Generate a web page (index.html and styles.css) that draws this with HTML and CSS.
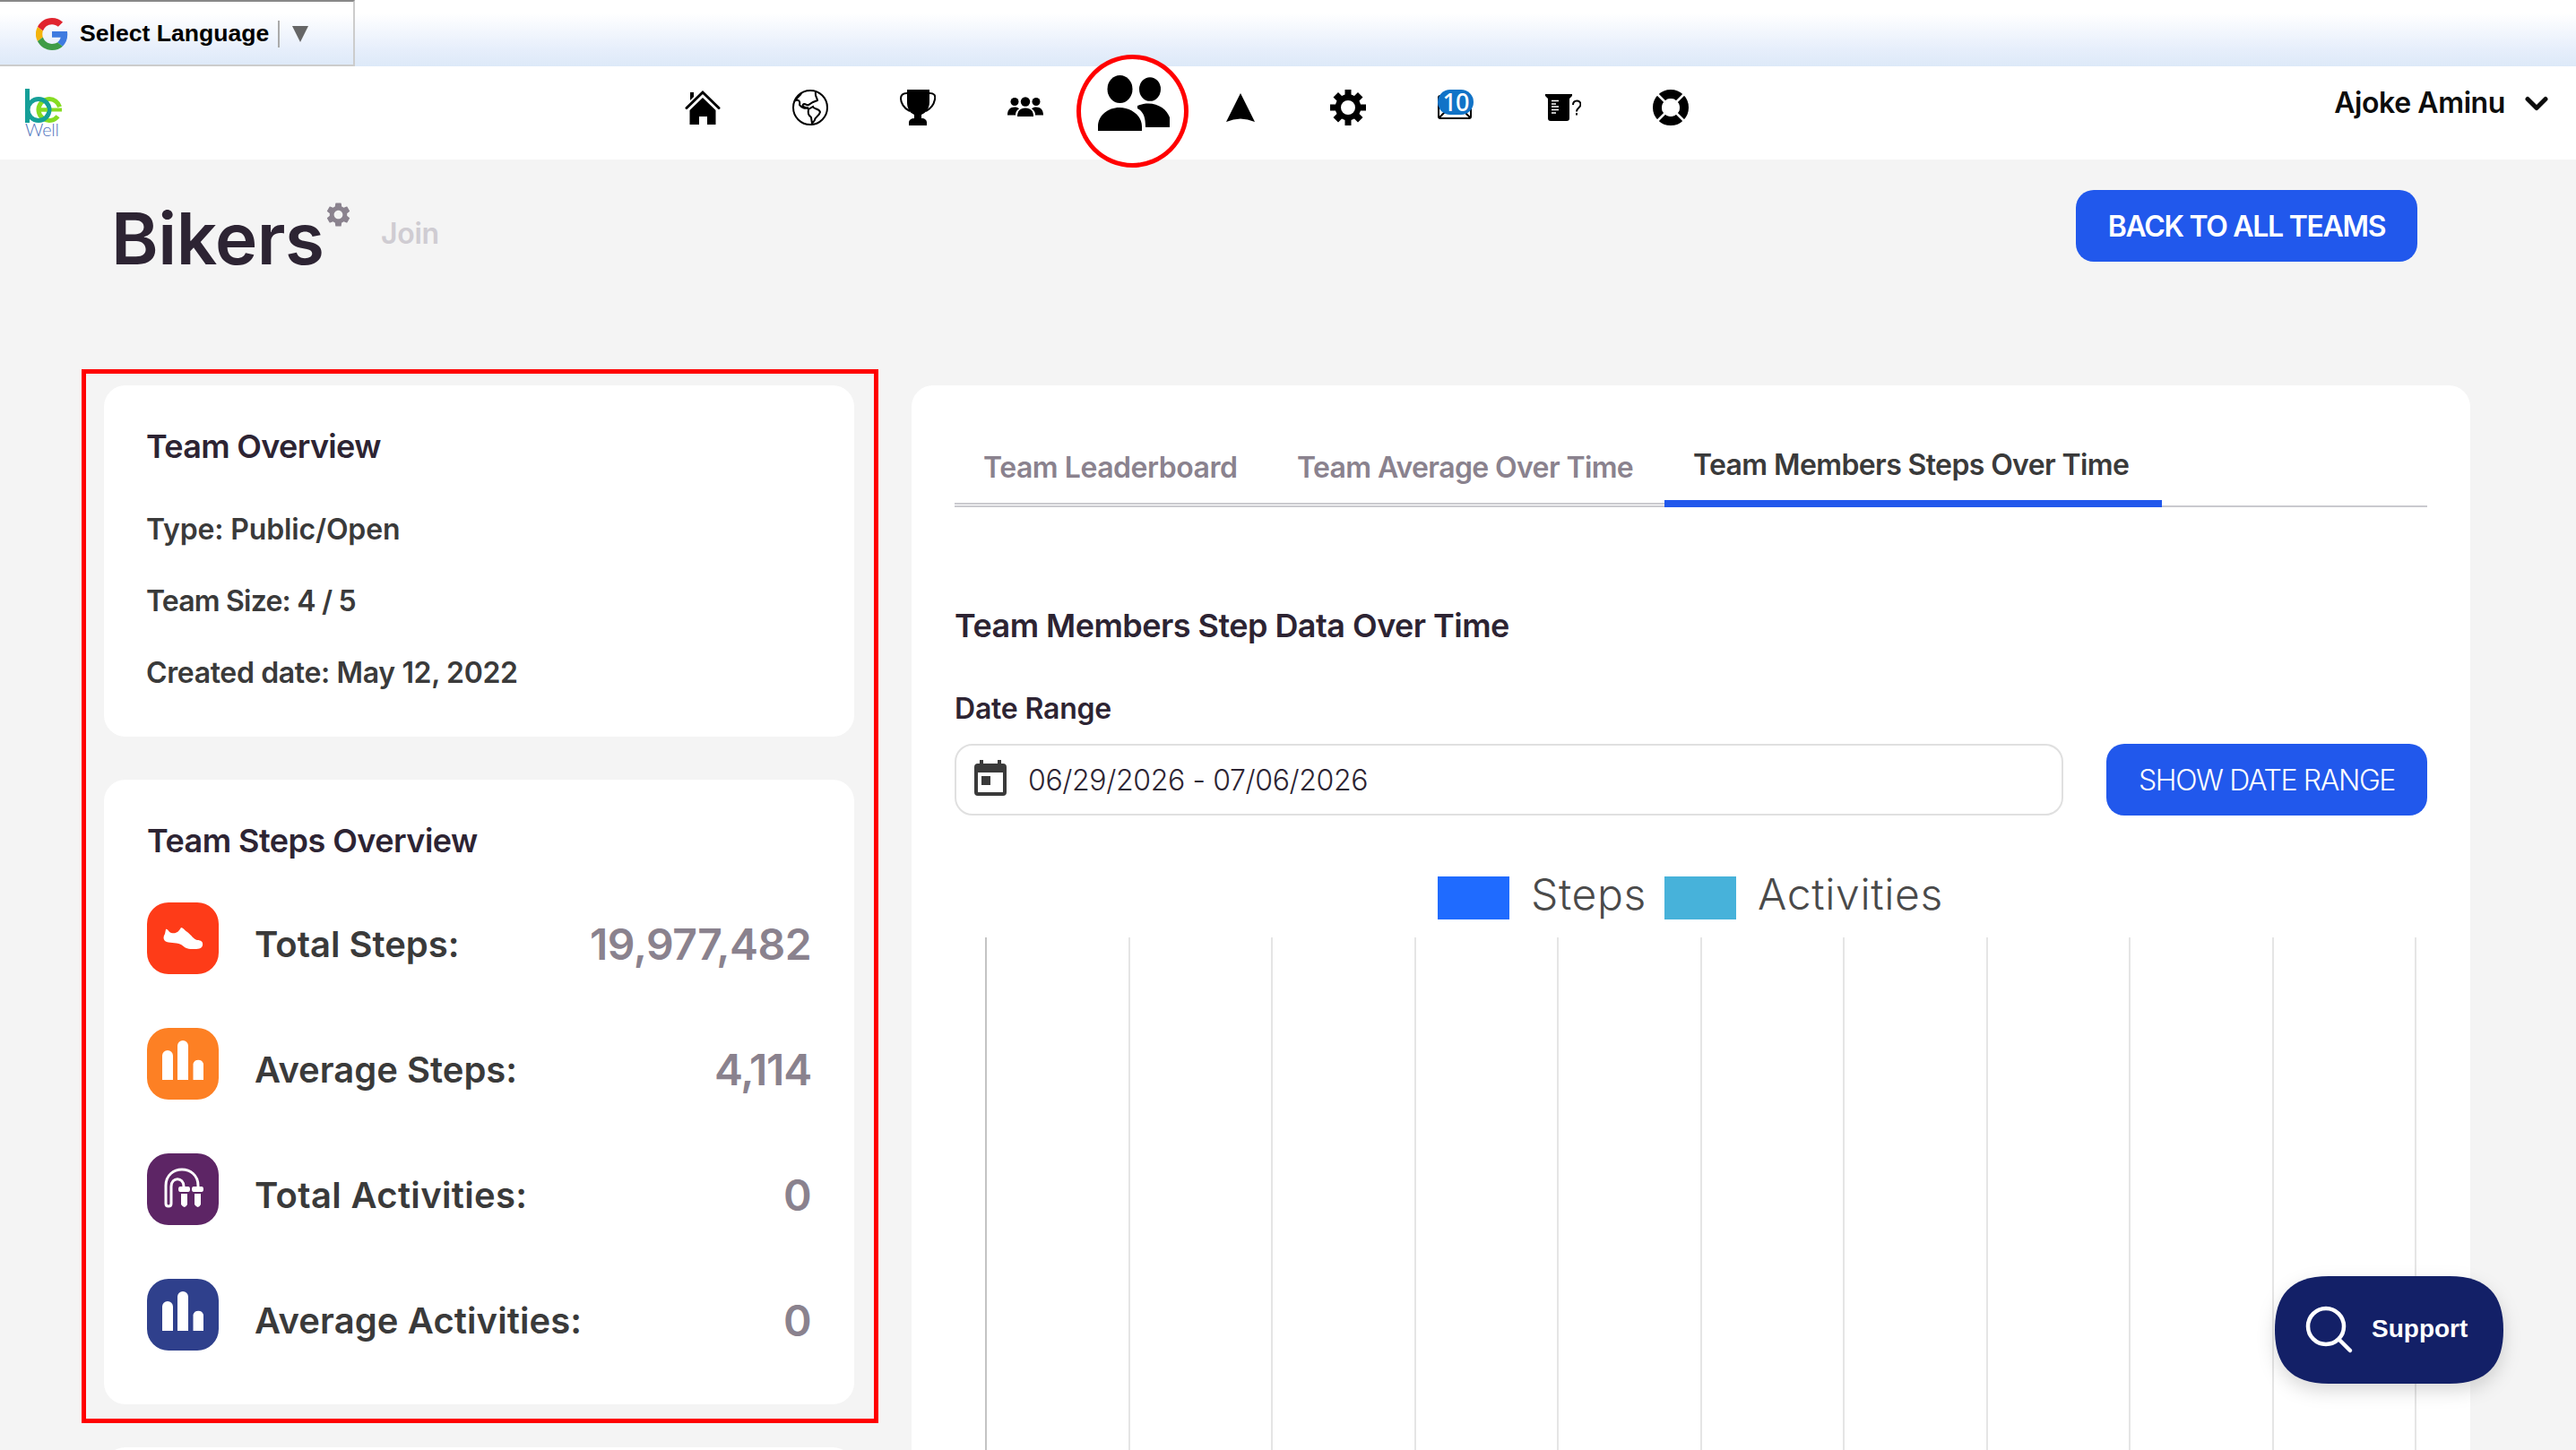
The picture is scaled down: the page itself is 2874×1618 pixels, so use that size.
FILE: index.html
```html
<!DOCTYPE html>
<html lang="en">
<head>
    <meta charset="UTF-8">
    <title>Bikers</title>
    <link rel="stylesheet" href="styles.css">
</head>
<body>
<div class="translate_bar">
    <div class="translate">
        <svg class="google" viewBox="0 0 48 48">
            <path fill="#e0242f" d="M24 9.5c3.5 0 6.700 1.200 9.200 3.600l6.900-6.900C35.900 2.400 30.500 0 24 0 14.600 0 6.500 5.400 2.600 13.200l8 6.200C12.400 13.700 17.700 9.500 24 9.500z"/>
            <path fill="#3f7be0" d="M47 24.600c0-1.600-.2-3.100-.4-4.600H24v9h12.900c-.6 3-2.300 5.500-4.800 7.200l7.700 6C44.400 38 47 31.800 47 24.600z"/>
            <path fill="#f3b30c" d="M10.500 28.600a14.500 14.500 0 0 1 0-9.200l-8-6.200a24 24 0 0 0 0 21.600z"/>
            <path fill="#3f9c46" d="M24 48c6.500 0 11.900-2.100 15.900-5.800l-7.700-6c-2.200 1.500-4.900 2.300-8.200 2.300-6.300 0-11.600-4.200-13.500-9.900l-8 6.200C6.500 42.600 14.600 48 24 48z"/>
        </svg>
        <span class="translate_text">Select Language</span>
        <span class="translate_arrow"></span>
    </div>
</div>
<header class="navbar">
    <svg class="logo" viewBox="0 0 44 56">
        <g fill="none">
            <circle cx="27" cy="23.500" r="12" stroke="#86dc22" stroke-width="5" stroke-dasharray="64 12" transform="rotate(37 27 23.500)"/>
            <path d="M15 23.500h26" stroke="#86dc22" stroke-width="4"/>
            <circle cx="15" cy="23.500" r="12" stroke="#159f98" stroke-width="5"/>
            <path d="M2.500 0v38" stroke="#159f98" stroke-width="5"/>
            <path d="M15 23.500h10" stroke="#86dc22" stroke-width="4"/>
        </g>
        <text class="logo_text" x="0" y="53" textLength="38">Well</text>
    </svg>
    <nav class="menu">
        <svg class="icon" viewBox="0 0 40 40">
            <path d="M6 3h4v5l-4 4z"/>
            <path d="M2 20.500L20 3l18 17.500" fill="none" stroke="#000" stroke-width="3" stroke-linecap="round"/>
            <path d="M5.500 23L20 9l14.500 14v16H25v-9h-9v9H5.500z"/>
        </svg>
        <svg class="icon outline" viewBox="0 0 40 40">
            <circle cx="20" cy="20" r="19"/>
            <path d="M10 4c-1 4-6 4-6 8 3-1 5 1 4 5 2 3 6 5 10 3M16 20c-4 0-6-3-3-4 3 0 3 2 5 1l5-3 5-2c0-3-3-4-2-9M18 22l5-3c1 3 7 2 8 6-1 5-6 5-6 9l-3 4-1-7c-2-2-4-3-3-9z"/>
        </svg>
        <svg class="icon" viewBox="0 0 40 40">
            <path d="M8 0h25v14c0 7-4 12-9 14v4c4 0 6 2 6 5v3H10v-3c0-3 2-5 6-5v-4c-5-2-8-7-8-14z"/>
            <path d="M8 4C3 4 1 6 1 10s3 11 10 14M33 4c5 0 7 2 6 7s-4 10-10 13" fill="none" stroke="#000" stroke-width="2"/>
        </svg>
        <svg class="icon" viewBox="0 0 40 40">
            <ellipse cx="8" cy="13.500" rx="4.500" ry="4.500"/><ellipse cx="32" cy="13.500" rx="4.500" ry="4.500"/>
            <circle cx="20" cy="13.500" r="5.200"/>
            <path d="M0 28.500c0-6 3-9 8-9 2 0 4 .5 5 2-3 1.500-4 4-4 7zM40 28.500c0-6-3-9-8-9-2 0-4 .5-5 2 3 1.500 4 4 4 7zM11 30c0-6 3-9.500 9-9.500s9 3.500 9 9.500z"/>
        </svg>
        <div class="menu_active">
            <svg class="icon_big" viewBox="0 0 80 62">
                <ellipse cx="24.500" cy="15.500" rx="14" ry="15.500"/>
                <ellipse cx="58" cy="15.500" rx="12" ry="13.300"/>
                <path d="M0 62V57C0 45 11 36 24 36s25 9 25 21v5zM44 34c20-8 37 5 37 19v5H53c0-11-2-17-9-21z"/>
            </svg>
            <span class="ring"></span>
        </div>
        <svg class="icon" viewBox="0 0 40 40"><path d="M20 4l16 32q-16-7-32 0z"/></svg>
        <svg class="icon" viewBox="0 0 40 40">
            <path fill-rule="evenodd" d="M16.500 0h7v5.500l3.500 1.500 4-4 5.500 5.500-4 4 1.500 4H40v7h-6l-1.500 3.500 4 4-5.500 5.500-4-4-3.500 1.500V40h-7v-6L13 32.500l-4 4L3.500 31l4-4L6 23.500H0v-7h6L7.500 12.500l-4-4L9 3l4 4 3.500-1.500zM20 12a8 8 0 1 0 0 16 8 8 0 0 0 0-16z"/>
        </svg>
        <div class="mail">
            <svg class="icon outline" viewBox="0 0 40 40">
                <rect x="1" y="7" width="36" height="25" rx="2"/>
                <path d="M2 31l10-10M36 31L26 21"/>
            </svg>
            <span class="badge">10</span>
        </div>
        <svg class="icon" viewBox="0 0 40 40">
            <path d="M0 5h30v2l-3 3v22q0 3-3 3H6q-3 0-3-3V10L0 7z"/>
            <path d="M7 12.500h8M7 16h5M7 19h8M7 22.500h8M7 26h5" stroke="#fff" stroke-width="1.500"/>
            <path d="M31 17c0-6 8.500-6 8.500-.5 0 4-4.500 3.500-4.500 8M35 26v2.500" fill="none" stroke="#000" stroke-width="2"/>
        </svg>
        <svg class="icon" viewBox="0 0 40 40">
            <circle cx="20" cy="20" r="15" fill="none" stroke="#000" stroke-width="10"/>
            <path d="M5 5l30 30M35 5L5 35" stroke="#fff" stroke-width="2.500"/>
            <circle cx="20" cy="20" r="10" fill="#fff"/>
        </svg>
    </nav>
    <div class="user">
        <span class="user_name">Ajoke Aminu</span>
        <svg class="chevron" viewBox="0 0 26 18"><path d="M3 3.500l10 10 10-10"/></svg>
    </div>
</header>
<main>
    <div class="page_head">
        <h1 class="page_title">Bikers</h1>
        <svg class="cog" viewBox="2 2 20 20">
            <path d="M19.140 12.940c.04-.3.060-.61.060-.94 0-.32-.02-.64-.07-.94l2.030-1.580c.18-.14.23-.41.120-.61l-1.920-3.320c-.12-.22-.37-.29-.59-.22l-2.390.96c-.5-.38-1.030-.7-1.620-.94l-.36-2.540c-.04-.24-.24-.41-.48-.41h-3.840c-.24 0-.43.170-.47.410l-.36 2.540c-.59.240-1.130.570-1.620.94l-2.390-.96c-.22-.08-.47 0-.59.220L2.740 8.870c-.12.210-.08.470.120.610l2.030 1.580c-.05.3-.09.630-.09.940s.02.640.07.940l-2.030 1.580c-.18.140-.23.410-.12.610l1.920 3.320c.12.220.37.290.59.220l2.390-.96c.5.380 1.030.7 1.620.94l.36 2.540c.05.240.24.410.48.410h3.840c.24 0 .44-.17.470-.41l.36-2.540c.59-.24 1.130-.56 1.620-.94l2.390.96c.22.080.47 0 .59-.22l1.920-3.320c.12-.22.070-.47-.12-.61zM12 15.600c-1.980 0-3.600-1.620-3.600-3.600s1.620-3.600 3.600-3.600 3.600 1.620 3.600 3.600-1.620 3.600-3.600 3.600z"/>
        </svg>
        <a class="join">Join</a>
        <button class="button back">BACK TO ALL TEAMS</button>
    </div>
    <div class="columns">
        <div class="sidebar">
            <section class="card overview">
                <h2 class="card_title">Team Overview</h2>
                <p class="info">Type: Public/Open</p>
                <p class="info info_size">Team Size: 4 / 5</p>
                <p class="info info_date">Created date: May 12, 2022</p>
            </section>
            <section class="card steps">
                <h2 class="card_title">Team Steps Overview</h2>
                <div class="stat">
                    <svg class="stat_icon red" viewBox="0 0 80 80">
                        <path d="M21 30c2-1 3 3 6 4 6 1 8-1 11-6 2 0 4 3 7 5 5 4 7 8 11 9 4 0 7 2 6 6-1 4-5 4-11 4-7 0-9-2-13-5-7-3-13-1-18-4-2-2-2-5 0-8z"/>
                    </svg>
                    <span class="stat_label">Total Steps:</span>
                    <span class="stat_value">19,977,482</span>
                </div>
                <div class="stat">
                    <svg class="stat_icon orange" viewBox="0 0 80 80">
                        <path d="M17 58V31a6 6 0 0 1 12 0v27zM34 58V20a6 6 0 0 1 12 0v38zM51.500 58V40a6 6 0 0 1 11.500 0v18z"/>
                    </svg>
                    <span class="stat_label">Average Steps:</span>
                    <span class="stat_value average">4,114</span>
                </div>
                <div class="stat">
                    <svg class="stat_icon purple" viewBox="0 0 80 80">
                        <path class="rope" d="M57 40v-4c0-24-36-24-36 0v20c0 4 6 4 6 0V37c0-11 14-11 14 0v3"/>
                        <path d="M37 37h9q2 0 2 3t-2 3h-9q-2 0-2-3t2-3zM52 37h9q2 0 2 3t-2 3h-9q-2 0-2-3t2-3zM38 45h7v12q-3 6-7 0zM53 45h7v12q-3 6-7 0z"/>
                    </svg>
                    <span class="stat_label activities">Total Activities:</span>
                    <span class="stat_value">0</span>
                </div>
                <div class="stat">
                    <svg class="stat_icon blue" viewBox="0 0 80 80">
                        <path d="M17 58V31a6 6 0 0 1 12 0v27zM34 58V20a6 6 0 0 1 12 0v38zM51.500 58V40a6 6 0 0 1 11.500 0v18z"/>
                    </svg>
                    <span class="stat_label activities_average">Average Activities:</span>
                    <span class="stat_value">0</span>
                </div>
            </section>
            <section class="card next"></section>
            <div class="highlight"></div>
        </div>
        <section class="card content">
            <div class="tabs">
                <a class="tab tab1">Team Leaderboard</a>
                <a class="tab tab2">Team Average Over Time</a>
                <a class="tab tab3 active">Team Members Steps Over Time</a>
            </div>
            <h2 class="card_title content_title">Team Members Step Data Over Time</h2>
            <label class="date_label">Date Range</label>
            <div class="date_row">
                <div class="date_input">
                    <svg class="calendar" viewBox="0 0 36 40">
                        <path fill-rule="evenodd" d="M6 0h4v4h16V0h4v4h2q4 0 4 4v28q0 4-4 4H4q-4 0-4-4V8q0-4 4-4h2zM4 14v22h28V14zM8 18h10v10H8z"/>
                    </svg>
                    <span class="date_text">06/29/2026 - 07/06/2026</span>
                </div>
                <button class="button show">SHOW DATE RANGE</button>
            </div>
            <div class="legend">
                <span class="swatch swatch_steps"></span>
                <span class="legend_steps">Steps</span>
                <span class="swatch swatch_activities"></span>
                <span>Activities</span>
            </div>
            <div class="chart">
                <i></i><i></i><i></i><i></i><i></i><i></i><i></i><i></i><i></i><i></i><i></i>
            </div>
        </section>
    </div>
</main>
<button class="support">
    <svg class="support_shape" viewBox="0 0 255 120">
        <path d="M60 0H195C238 0 255 22 255 60S238 120 195 120H60C17 120 0 98 0 60S17 0 60 0z"/>
        <g><circle cx="57" cy="56" r="20"/><path d="M71.500 70.500L84 83"/></g>
    </svg>
    <span class="support_text">Support</span>
</button>
</body>
</html>
```
FILE: styles.css
```css
*{
    box-sizing: border-box;
}
body{
    margin: 0;
    background-color: #f4f4f4;
    font-family: Inter, "Open Sans", sans-serif;
    font-size: 32px;
    color: #3a3a3a;
}
h1,h2,p{
    margin: 0;
}
button{
    border: 0;
    padding: 0;
    font: inherit;
}

/* translate bar */
.translate_bar{
    height: 74px;
    background: linear-gradient(#fff 20%, #e6eefb 75%, #dde9f8);
}
.translate{
    display: flex;
    align-items: center;
    width: 396px;
    height: 74px;
    padding-left: 40px;
    border: 2px solid #ccc;
    border-top-color: #888;
    border-left: 0;
    font: bold 26.6px "Liberation Sans", Arial, sans-serif;
    color: #000;
}
.google{
    width: 36px;
    height: 36px;
    margin: 2px 13px 0 0;
}
.translate_text{
    padding-top: 1px;
}
.translate_arrow{
    display: flex;
    align-items: center;
    height: 30px;
    margin: 2px 0 0 10px;
    padding-left: 14px;
    border-left: 2px solid #aaa;
}
.translate_arrow::after{
    content: "";
    border: 9px solid transparent;
    border-top: 18px solid #666;
    border-bottom: 0;
}

/* navigation */
.navbar{
    display: flex;
    height: 104px;
    background-color: #fff;
}
.logo{
    width: 44px;
    height: 56px;
    margin: 25px 692px 0 28px;
}
.logo_text{
    font: 300 20px Lato, sans-serif;
    fill: #4f74bd;
}
.menu{
    display: flex;
    gap: 80px;
    padding-top: 26px;
    width: 1120px;
}
.icon{
    display: block;
    width: 40px;
    height: 40px;
    flex: none;
}
.outline{
    fill: none;
    stroke: #000;
    stroke-width: 2;
}
.menu_active{
    position: relative;
    width: 40px;
}
.icon_big{
    position: absolute;
    left: -19px;
    top: -16px;
    width: 80px;
    height: 62px;
    z-index: 2;
}
.ring{
    position: absolute;
    left: -43px;
    top: -39px;
    width: 125px;
    height: 126px;
    border: 5px solid #f00;
    border-radius: 50%;
    background-color: #fff;
}
.mail{
    position: relative;
}
.badge{
    position: absolute;
    left: 0;
    top: 0;
    width: 40px;
    height: 28px;
    border-radius: 14px;
    background-color: #1173c7;
    color: #fff;
    font: 500 27px/28px "Noto Sans", sans-serif;
    letter-spacing: -1px;
    text-align: center;
}
.user{
    display: flex;
    margin-left: auto;
    padding: 21px 31px 0 0;
    line-height: 40px;
    font-weight: 600;
    letter-spacing: -.4px;
    color: #0c0c0c;
}
.chevron{
    width: 26px;
    height: 18px;
    margin: 12px 0 0 22px;
    fill: none;
    stroke: #0c0c0c;
    stroke-width: 5;
    stroke-linecap: round;
    stroke-linejoin: round;
}

/* page heading */
.page_head{
    display: flex;
    height: 252px;
    padding: 34px 177px 0 124px;
}
.page_title{
    width: 240px;
    font-size: 80px;
    line-height: 108px;
    font-weight: 600;
    letter-spacing: -.5px;
    color: #2d2433;
}
.cog{
    width: 27px;
    height: 27px;
    margin: 14px 34px 0 0;
    fill: #8a828e;
}
.join{
    margin-top: 29px;
    line-height: 40px;
    font-weight: 600;
    letter-spacing: -.3px;
    color: #cfccd2;
}
.button{
    height: 80px;
    border-radius: 20px;
    background-color: #2158ec;
    color: #fff;
    font-size: 32px;
    line-height: 82px;
    white-space: nowrap;
}
.back{
    width: 381px;
    margin-left: auto;
    font-weight: 600;
    letter-spacing: -1.3px;
}

/* cards */
main{
    height: 1440px;
    overflow: hidden;
}
.columns{
    display: flex;
    gap: 64px;
    height: 1188px;
    padding-left: 116px;
}
.sidebar{
    position: relative;
    width: 837px;
}
.card{
    border-radius: 24px;
    background-color: #fff;
}
.card_title{
    font-size: 36px;
    line-height: 40px;
    font-weight: 600;
    letter-spacing: -.54px;
    color: #2d2433;
}
.overview{
    height: 392px;
    padding: 48px 47px;
    margin-bottom: 48px;
}
.overview .card_title{
    margin-bottom: 53px;
    letter-spacing: -.68px;
}
.info{
    margin-bottom: 40px;
    line-height: 40px;
    font-weight: 600;
    letter-spacing: -.15px;
}
.info_size{
    letter-spacing: -.8px;
}
.info_date{
    letter-spacing: -.36px;
}
.steps{
    height: 697px;
    padding: 48px;
    margin-bottom: 48px;
}
.steps .card_title{
    margin-bottom: 49px;
}
.next{
    height: 200px;
}
.stat{
    display: flex;
    height: 80px;
    margin-bottom: 60px;
    line-height: 93px;
}
.stat_icon{
    width: 80px;
    height: 80px;
    margin-right: 40px;
    border-radius: 24px;
    fill: #fff;
}
.red{
    background-color: #fe3b18;
}
.orange{
    background-color: #fd8024;
}
.purple{
    background-color: #5d2565;
}
.blue{
    background-color: #2f408c;
}
.rope{
    fill: none;
    stroke: #fff;
    stroke-width: 3;
}
.stat_label{
    font-size: 40px;
    font-weight: 600;
}
.activities{
    letter-spacing: .33px;
}
.activities_average{
    letter-spacing: .1px;
}
.stat_value{
    margin-left: auto;
    font-size: 48px;
    font-weight: 600;
    letter-spacing: -.55px;
    color: #8a828e;
}
.average{
    letter-spacing: -1.2px;
}
.highlight{
    position: absolute;
    left: -25px;
    top: -18px;
    width: 889px;
    height: 1176px;
    border: 5px solid #f00;
}

/* team data */
.content{
    width: 1739px;
    height: 1240px;
    padding: 48px;
}
.tabs{
    display: flex;
    height: 88px;
    border-bottom: 2px solid #cacacf;
    line-height: 40px;
}
.tab{
    height: 85px;
    padding: 24px 0 0 32px;
    border-bottom: 2px solid #cacacf;
    font-weight: 600;
    letter-spacing: -.62px;
    color: #8a828e;
    white-space: nowrap;
}
.tab1{
    width: 350px;
    letter-spacing: -.47px;
}
.tab2{
    width: 442px;
}
.tab3{
    width: 555px;
}
.active{
    height: 88px;
    padding-top: 21px;
    border-bottom: 8px solid #2158ec;
    color: #3a3a3a;
}
.content_title{
    margin: 112px 0 53px;
}
.date_label{
    display: block;
    line-height: 40px;
    font-weight: 600;
    letter-spacing: -.2px;
    color: #2d2433;
}
.date_row{
    display: flex;
    gap: 48px;
    margin: 19px 0 68px;
}
.date_input{
    display: flex;
    width: 1237px;
    height: 80px;
    padding-left: 20px;
    border: 2px solid #e0e0e0;
    border-radius: 20px;
    line-height: 78px;
    color: #2d2433;
}
.calendar{
    width: 36px;
    height: 40px;
    margin: 16px 24px 0 0;
    fill: #3a3a3a;
}
.date_text{
    font-weight: 300;
    letter-spacing: -.37px;
}
.show{
    width: 358px;
    font-weight: 300;
    letter-spacing: -1.35px;
}
.legend{
    display: flex;
    height: 48px;
    margin-bottom: 20px;
    padding-left: 539px;
    font-size: 48px;
    line-height: 39px;
    font-weight: 300;
    letter-spacing: .65px;
    color: #4a4a4a;
}
.swatch{
    width: 80px;
    height: 48px;
    margin-right: 24px;
}
.swatch_steps{
    background-color: #1f6bff;
}
.swatch_activities{
    background-color: #47b2da;
}
.legend_steps{
    width: 149px;
}
.chart{
    display: flex;
    justify-content: space-between;
    width: 1597px;
    height: 620px;
    margin-left: 34px;
}
.chart i{
    width: 2px;
    background-color: #e5e5e5;
}
.chart i:first-child{
    background-color: #c4c4c4;
}

/* support button */
.support{
    position: absolute;
    left: 2538px;
    top: 1424px;
    width: 255px;
    height: 120px;
    background: none;
    text-align: left;
}
.support_shape{
    position: absolute;
    left: 0;
    top: 0;
    width: 255px;
    height: 120px;
    overflow: visible;
    fill: #132067;
    filter: drop-shadow(0 8px 10px rgba(0, 0, 0, .15));
}
.support_shape g{
    fill: none;
    stroke: #fff;
    stroke-width: 4.5;
    stroke-linecap: round;
}
.support_text{
    position: relative;
    display: block;
    margin: 0 0 2px 108px;
    font: bold 28px "Liberation Sans", Arial, sans-serif;
    color: #fff;
}
```
